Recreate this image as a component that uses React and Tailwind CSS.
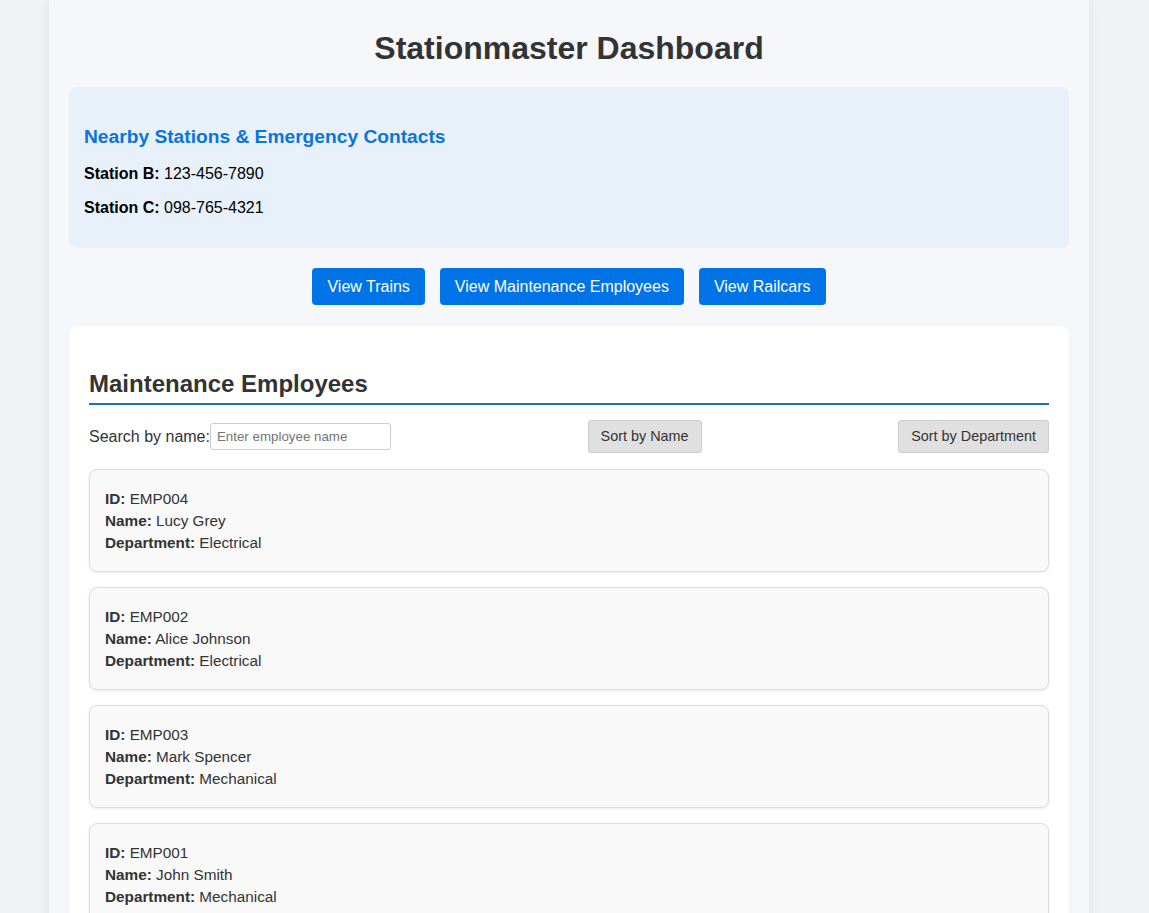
import React from "react";

const employees = [
  { id: "EMP004", name: "Lucy Grey", dept: "Electrical" },
  { id: "EMP002", name: "Alice Johnson", dept: "Electrical" },
  { id: "EMP003", name: "Mark Spencer", dept: "Mechanical" },
  { id: "EMP001", name: "John Smith", dept: "Mechanical" },
];

export default function App() {
  return (
    <div className="min-h-screen bg-[#f0f2f5] font-['Liberation_Sans',Arial,sans-serif] text-[#333]">
      <div className="ml-[49px] w-[1040px] bg-[#f5f7fa] px-5 pb-5 pt-[30px] shadow-[0_0_10px_rgba(0,0,0,0.08)]">
        <h1 className="text-center text-[32px] font-bold leading-[37px] text-[#333]">Stationmaster Dashboard</h1>

        <div className="mt-[20px] rounded-lg bg-[#e8f0fa] px-[15px] pb-[31px] pt-[38px]">
          <h3 className="text-[19.2px] font-bold leading-[24px] text-[#0a74da]">Nearby Stations &amp; Emergency Contacts</h3>
          <p className="mt-[16px] text-[16px] leading-[18px] text-black"><strong>Station B:</strong> 123-456-7890</p>
          <p className="mt-[16px] text-[16px] leading-[18px] text-black"><strong>Station C:</strong> 098-765-4321</p>
        </div>

        <div className="mt-[20px] flex justify-center gap-[15px]">
          <button className="h-[37px] rounded bg-[#0073e6] px-[15px] text-[16px] text-white">View Trains</button>
          <button className="h-[37px] rounded bg-[#0073e6] px-[15px] text-[16px] text-white">View Maintenance Employees</button>
          <button className="h-[37px] rounded bg-[#0073e6] px-[15px] text-[16px] text-white">View Railcars</button>
        </div>

        <div className="mt-[21px] rounded-lg bg-white px-5 pb-5 pt-[44px] shadow-[0_2px_4px_rgba(0,0,0,0.04)]">
          <h2 className="border-b-2 border-[#1a73b8] pb-[5px] text-[24px] font-bold leading-[28px] text-[#333]">Maintenance Employees</h2>
          <div className="mt-[15px] flex h-[33px] items-center justify-between">
            <div className="flex items-center">
              <label className="text-[16px] text-[#333]">Search by name:</label>
              <input
                placeholder="Enter employee name"
                className="h-[27px] w-[181px] rounded-[3px] border border-[#ccc] px-[6px] text-[13.33px] placeholder:text-[#757575]"
              />
            </div>
            <button className="h-[33px] rounded-[3px] border border-[#ccc] bg-[#e0e0e0] px-[12px] text-[14.4px] text-[#333]">Sort by Name</button>
            <button className="h-[33px] rounded-[3px] border border-[#ccc] bg-[#e0e0e0] px-[12px] text-[14.4px] text-[#333]">Sort by Department</button>
          </div>

          <div className="mt-[16px] flex flex-col gap-[15px]">
            {employees.map((e) => (
              <div key={e.id} className="rounded-lg border border-[#ddd] bg-[#f9f9f9] px-[15px] pb-[17px] pt-[18px] text-[15.3px] leading-[22px] text-[#333] shadow-[0_1px_3px_rgba(0,0,0,0.08)]">
                <div><strong>ID:</strong> {e.id}</div>
                <div><strong>Name:</strong> {e.name}</div>
                <div><strong>Department:</strong> {e.dept}</div>
              </div>
            ))}
          </div>
        </div>
      </div>
    </div>
  );
}
